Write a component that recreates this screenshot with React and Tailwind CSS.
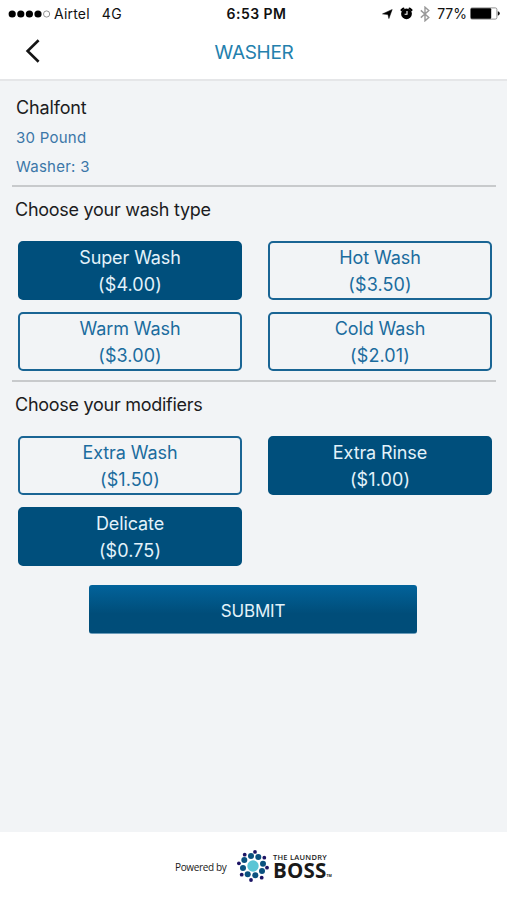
import React, { useState } from 'react';

const washTypes = [
  { id: 'super', name: 'Super Wash', price: '4.00' },
  { id: 'hot', name: 'Hot Wash', price: '3.50' },
  { id: 'warm', name: 'Warm Wash', price: '3.00' },
  { id: 'cold', name: 'Cold Wash', price: '2.01' },
];

const modifiers = [
  { id: 'extra-wash', name: 'Extra Wash', price: '1.50' },
  { id: 'extra-rinse', name: 'Extra Rinse', price: '1.00' },
  { id: 'delicate', name: 'Delicate', price: '0.75' },
];

// Dots of the logo, in a 32x32 box
const innerDots = [[14, 6], [21.3, 7], [26, 13.7], [25, 21], [18.3, 25.3], [10.7, 24.3], [6, 18], [7.3, 10]];
const outerDots = [[18, 1.9], [27.3, 7.7], [30, 17.7], [24.7, 27.7], [14, 30], [4.7, 24.7], [1.9, 13.3], [7.7, 4.7]];

const StatusBar = () => (
  <div className="grid grid-cols-3 items-center h-[27px] pl-2 pr-[7px] text-[14px] text-[#111]">
    <div className="flex items-center">
      <svg width="43" height="10" viewBox="0 0 43 10">
        <circle cx="4.2" cy="5" r="3.6" fill="#000" />
        <circle cx="12.8" cy="5" r="3.6" fill="#000" />
        <circle cx="21.4" cy="5" r="3.6" fill="#000" />
        <circle cx="30" cy="5" r="3.6" fill="#000" />
        <circle cx="38.6" cy="5" r="3.1" fill="none" stroke="#777" strokeWidth="0.8" />
      </svg>
      <span className="ml-[3px] tracking-[0.2px]">Airtel</span>
      <span className="ml-3 tracking-[0.4px]">4G</span>
    </div>
    <span className="text-center font-semibold pl-[5px] tracking-[0.45px] whitespace-nowrap">6:53 PM</span>
    <div className="flex items-center justify-end">
      <svg width="11" height="10" viewBox="0 0 11 10">
        <path d="M10.2 0.5 6.9 9.6 5.9 5.5 0.5 4.9Z" fill="#000" stroke="#000" strokeWidth="0.5" />
      </svg>
      <svg className="ml-[7px]" width="13" height="13" viewBox="0 0 13 13">
        <circle cx="6.5" cy="6.8" r="5.4" fill="#000" />
        <path d="M1.5 3.1 3.4 1.5M11.5 3.1 9.6 1.5" stroke="#000" strokeWidth="2.1" strokeLinecap="round" />
        <path d="M7 4v3.2H4.6" stroke="#fff" strokeWidth="1.1" fill="none" />
      </svg>
      <svg className="ml-[7px]" width="10" height="16" viewBox="0 0 10 16">
        <path d="M0.8 4.4 8.8 11.4 5 14.8V1.2L8.8 4.6 0.8 11.6" stroke="#999" strokeWidth="1.4" fill="none" />
      </svg>
      <span className="ml-[7px]">77%</span>
      <svg className="ml-[3px]" width="30" height="13" viewBox="0 0 30 13">
        <rect x="0.5" y="0.9" width="26.4" height="11.2" rx="1.6" fill="#fff" stroke="#777" strokeWidth="0.8" />
        <rect x="0.8" y="1.2" width="20.4" height="10.6" rx="1" fill="#000" />
        <path d="M27.8 4.3q2 0.6 2 2.2t-2 2.2z" fill="#111" />
      </svg>
    </div>
  </div>
);

const OptionButton = ({ option, selected, onClick }) => (
  <button
    onClick={onClick}
    className={`h-[59px] rounded-[5px] border-2 text-[18px] leading-[27px] tracking-[-0.1px] flex flex-col items-center justify-center ${
      selected ? 'bg-[#004f7c] border-[#004f7c] text-[#e3f2fa]' : 'border-[#1a6594] text-[#1b6c9e]'
    }`}
  >
    <span>{option.name}</span>
    <span className="tracking-[0.1px]">(${option.price})</span>
  </button>
);

const OptionGroup = ({ title, options, selected, onSelect }) => (
  <section className="border-t-2 border-[#c8cacc] ml-3 mr-[11px] pb-[9px]">
    <h2 className="ml-[3px] mt-[9px] h-7 text-[18px] leading-7 tracking-[-0.27px] text-[#1c1c1e]">{title}</h2>
    <div className="grid grid-cols-2 gap-x-[26px] gap-y-3 ml-[6px] mr-[4px] mt-[17px]">
      {options.map((option) => (
        <OptionButton
          key={option.id}
          option={option}
          selected={selected.includes(option.id)}
          onClick={() => onSelect(option.id)}
        />
      ))}
    </div>
  </section>
);

const Footer = () => (
  <footer className="h-[68px] bg-white flex items-center pl-[175px] text-[#1a1a1a]">
    <span className="w-[52px] pt-[2px] text-[10px] tracking-[-0.35px] whitespace-nowrap font-['Open_Sans',sans-serif] font-medium">Powered by</span>
    <svg className="ml-[10px]" width="32" height="32" viewBox="0 0 32 32">
      <circle cx="16" cy="16" r="5.7" fill="#5bc5d5" />
      {innerDots.map(([x, y]) => (
        <circle key={`${x}-${y}`} cx={x} cy={y} r="3" fill="#0b527f" />
      ))}
      {outerDots.map(([x, y]) => (
        <circle key={`${x}-${y}`} cx={x} cy={y} r="1.9" fill="#1c1464" />
      ))}
    </svg>
    <div className="ml-1 font-['Open_Sans',sans-serif] font-bold whitespace-nowrap">
      <div className="text-[7.5px] leading-[8px] tracking-[0.25px] font-semibold">THE LAUNDRY</div>
      <div className="flex items-end text-[20.5px] leading-[18px]">
        <span className="tracking-[0.2px]">BOSS</span>
        <span className="text-[3.5px] leading-[6px]">TM</span>
      </div>
    </div>
  </footer>
);

const App = () => {
  const [washType, setWashType] = useState('super');
  const [picked, setPicked] = useState(['extra-rinse', 'delicate']);

  const toggleModifier = (id) => {
    setPicked(picked.includes(id) ? picked.filter((item) => item !== id) : [...picked, id]);
  };

  return (
    <div className="flex flex-col h-screen bg-[#f2f4f6] font-['Inter',sans-serif]">
      <header className="h-[81px] bg-white border-b-2 border-[#e5e6e8]">
        <StatusBar />
        <div className="grid grid-cols-[100px_1fr_100px] items-center h-[48px]">
          <button className="pl-[25px]">
            <svg width="16" height="26" viewBox="0 0 16 26">
              <path d="M13.6 2.2 2.6 13l11 10.8" fill="none" stroke="#151515" strokeWidth="2.6" />
            </svg>
          </button>
          <h1 className="text-center pt-[5px] pl-[1px] text-[19px] tracking-[-0.3px] text-[#2380ad]">WASHER</h1>
        </div>
      </header>

      <main className="flex-1">
        <div className="h-[104px] pl-4 pt-[13px] text-[15px] tracking-[0.25px] text-[#3c77a8]">
          <div className="text-[18px] leading-7 tracking-[-0.15px] text-[#1c1c1e]">Chalfont</div>
          <div className="mt-[1px] leading-[29px]">30 Pound</div>
          <div className="leading-[29px]">Washer: 3</div>
        </div>
        <OptionGroup
          title="Choose your wash type"
          options={washTypes}
          selected={[washType]}
          onSelect={setWashType}
        />
        <OptionGroup
          title="Choose your modifiers"
          options={modifiers}
          selected={picked}
          onSelect={toggleModifier}
        />
        <button className="block ml-[89px] mt-[10px] w-[328px] h-[49px] pt-[6px] rounded-[3px] border-b border-[#6a9bb9] bg-linear-to-b from-[#02639b] to-[#004d79] to-60% text-[17px] tracking-[-0.2px] text-[#e3f2fa]">
          SUBMIT
        </button>
      </main>

      <Footer />
    </div>
  );
};

export default App;
